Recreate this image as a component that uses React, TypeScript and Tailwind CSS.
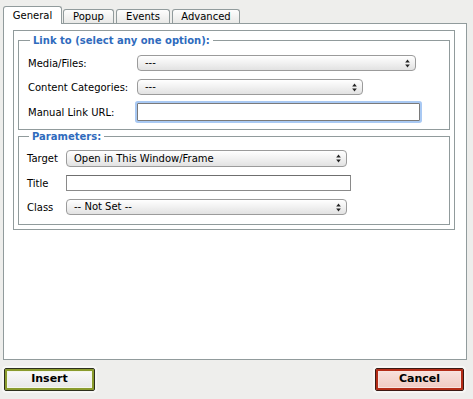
import React from "react";

function Arrows() {
  return (
    <svg width="5" height="9" viewBox="0 0 5 9" className="shrink-0">
      <path d="M2.5 0.5 L4.8 3.6 L0.2 3.6 Z" fill="#222" />
      <path d="M2.5 8.5 L4.8 5.4 L0.2 5.4 Z" fill="#222" />
    </svg>
  );
}

function Select({ w, text }: { w: string; text: string }) {
  return (
    <div
      className={`${w} h-[16px] flex items-center justify-between rounded-[4px] border border-[#9b9b9b] bg-gradient-to-b from-[#ffffff] via-[#f1f1f1] to-[#e2e2e2] pl-[7px] pr-[5px] shadow-[0_1px_0_rgba(255,255,255,0.6)]`}
    >
      <span className="leading-[14px]">{text}</span>
      <Arrows />
    </div>
  );
}

export default function App() {
  return (
    <div className="w-[473px] h-[399px] bg-[#eeeeec] font-['DejaVu_Sans',Verdana,sans-serif] text-[10px] text-black flex flex-col overflow-hidden">
      {/* Tabs */}
      <div className="relative z-10 h-[24px] flex items-end pl-[3px]">
        <div className="w-[59px] h-[18px] bg-white border border-b-0 border-[#919b9c] rounded-t-[3px] flex items-center justify-center pb-[1px]">
          General
        </div>
        <div className="ml-[1px] mb-[1px] w-[51px] h-[14px] bg-gradient-to-b from-[#fdfdfd] to-[#e9e9e7] border border-b-0 border-[#919b9c] rounded-t-[3px] flex items-center justify-center">
          Popup
        </div>
        <div className="ml-[2px] mb-[1px] w-[54px] h-[14px] bg-gradient-to-b from-[#fdfdfd] to-[#e9e9e7] border border-b-0 border-[#919b9c] rounded-t-[3px] flex items-center justify-center">
          Events
        </div>
        <div className="ml-[2px] mb-[1px] w-[68px] h-[14px] bg-gradient-to-b from-[#fdfdfd] to-[#e9e9e7] border border-b-0 border-[#919b9c] rounded-t-[3px] flex items-center justify-center">
          Advanced
        </div>
      </div>

      {/* Panel */}
      <div className="-mt-px ml-[3px] w-[464px] h-[337px] border border-[#919b9c] bg-white pt-[6px] pl-[9px]">
        <div className="w-[442px] h-[200px] border border-[#919b9c] pt-[3px] px-[4px]">
          <fieldset className="border border-[#919b9c] pl-[9px] pb-[8px]">
            <legend className="ml-[2px] px-[3px] font-bold text-[#2f6bbd] leading-[13px]">
              Link to (select any one option):
            </legend>
            <div className="mt-[8px] flex items-center h-[16px]">
              <span className="w-[109px]">Media/Files:</span>
              <Select w="w-[279px]" text="---" />
            </div>
            <div className="mt-[8px] flex items-center h-[16px]">
              <span className="w-[109px]">Content Categories:</span>
              <Select w="w-[226px]" text="---" />
            </div>
            <div className="mt-[8px] flex items-center h-[18px]">
              <span className="w-[109px]">Manual Link URL:</span>
              <div className="w-[283px] h-[18px] border border-[#7a7a7a] bg-white shadow-[0_0_0_2px_#a9c9f3] rounded-[1px]" />
            </div>
          </fieldset>

          <fieldset className="border border-[#919b9c] pl-[8px] pb-[9px]">
            <legend className="ml-[2px] px-[3px] font-bold text-[#2f6bbd] leading-[13px]">
              Parameters:
            </legend>
            <div className="mt-[7px] flex items-center h-[17px]">
              <span className="w-[39px]">Target</span>
              <Select w="w-[281px] h-[17px]" text="Open in This Window/Frame" />
            </div>
            <div className="mt-[8px] flex items-center h-[16px]">
              <span className="w-[39px]">Title</span>
              <div className="w-[285px] h-[16px] border border-[#8a8a8a] border-t-[#6f6f6f] bg-white" />
            </div>
            <div className="mt-[8px] flex items-center h-[16px]">
              <span className="w-[39px]">Class</span>
              <Select w="w-[281px]" text="-- Not Set --" />
            </div>
          </fieldset>
        </div>
      </div>

      {/* Buttons */}
      <div className="mt-[8px] flex justify-between pl-[4px] pr-[9px]">
        <div className="w-[91px] h-[23px] rounded-[2px] border border-[#2c2f1c] shadow-[inset_0_0_0_2px_#8a9b2c,inset_0_0_0_3px_#f4f6ea,0_0_0_2px_#f7f7f5] bg-gradient-to-b from-[#fbfbfb] to-[#e6e6e4] flex items-center justify-center font-bold text-[11px]">
          Insert
        </div>
        <div className="w-[89px] h-[23px] rounded-[2px] border border-[#3a1a14] shadow-[inset_0_0_0_2px_#b42c17,inset_0_0_0_3px_#f8e3df,0_0_0_2px_#f7f7f5] bg-gradient-to-b from-[#f9e3df] to-[#efc8c0] flex items-center justify-center font-bold text-[11px]">
          Cancel
        </div>
      </div>
    </div>
  );
}
